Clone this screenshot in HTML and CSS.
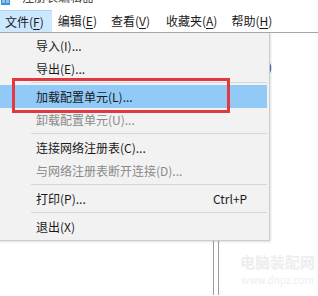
FILE: index.html
```html
<!DOCTYPE html>
<html lang="zh-CN">
<head>
    <meta charset="UTF-8">
    <meta name="viewport" content="width=device-width, initial-scale=1.0">
    <title>注册表编辑器</title>
    <link rel="stylesheet" href="styles.css">
</head>
<body>
    <div class="titlebar">
        <svg class="app-icon" width="11" height="6" viewBox="0 0 11 6">
            <rect x="1" y="0" width="9" height="5" fill="#3d8fd8"/>
            <rect x="2" y="0" width="3" height="3" fill="#8cc4f0"/>
            <rect x="6" y="0" width="3" height="3" fill="#8cc4f0"/>
        </svg>
        <span class="title-text">注册表编辑器</span>
    </div>

    <nav class="menubar">
        <span class="menu-item open">文件(<u>F</u>)</span>
        <span class="menu-item">编辑(<u>E</u>)</span>
        <span class="menu-item">查看(<u>V</u>)</span>
        <span class="menu-item">收藏夹(<u>A</u>)</span>
        <span class="menu-item">帮助(<u>H</u>)</span>
    </nav>

    <div class="workspace">
        <div class="tree-pane"></div>
        <div class="detail-pane">
            <div class="detail-row">(默认)</div>
        </div>

        <!-- 水印 -->
        <div class="watermark">
            <div class="wm-big">电脑装配网</div>
            <div class="wm-small">www.dnpz.com</div>
        </div>

        <!-- 文件菜单 -->
        <ul class="dropdown">
            <li class="item"><span class="label">导入(I)...</span></li>
            <li class="item"><span class="label">导出(E)...</span></li>
            <li class="sep"></li>
            <li class="item active"><span class="label">加载配置单元(L)...</span></li>
            <li class="item disabled"><span class="label">卸载配置单元(U)...</span></li>
            <li class="sep"></li>
            <li class="item"><span class="label">连接网络注册表(C)...</span></li>
            <li class="item disabled"><span class="label">与网络注册表断开连接(D)...</span></li>
            <li class="sep"></li>
            <li class="item"><span class="label">打印(P)...</span><span class="shortcut">Ctrl+P</span></li>
            <li class="sep"></li>
            <li class="item"><span class="label">退出(X)</span></li>
        </ul>

        <div class="callout"></div>
    </div>
</body>
</html>
```

FILE: styles.css
```css
body {
    margin: 0;
    background: #ffffff;
    font-family: "Noto Sans CJK SC", "Noto Sans", sans-serif;
    font-size: 12px;
    color: #1a1a1a;
    overflow: hidden;
    height: 296px;
}

/* 标题栏 (只露出底部) */
.titlebar {
    height: 6px;
    overflow: hidden;
    display: flex;
    align-items: flex-start;
    gap: 11px;
}

.app-icon {
    flex: none;
}

.title-text {
    margin-top: -11px;
    line-height: 16px;
    color: #444;
}

/* 菜单栏 */
.menubar {
    display: flex;
    margin-top: 4px;
    height: 22px;
}

.menu-item {
    padding: 0 8px 0 6px;
    line-height: 22px;
    box-sizing: border-box;
}

.menu-item:nth-child(4) {
    padding-left: 8px;
}

.menu-item.open {
    padding-left: 5px;
    background: #cce8ff;
    border-top: 1px solid #a9d5fb;
    line-height: 21px;
}

.menu-item u {
    text-decoration-thickness: 1px;
    text-underline-offset: 2px;
}

/* 主区域 */
.workspace {
    position: relative;
    display: flex;
    border-top: 1px solid #a6a6a6;
    height: 262px;
    overflow: hidden;
}

.tree-pane {
    width: 213px;
    border-right: 1px solid #9c9c9c;
}

.detail-pane {
    flex: 1;
    margin-left: 4px;
    border-left: 1px solid #9c9c9c;
    padding-top: 24px;
}

.detail-row {
    padding-left: 21px;
    line-height: 20px;
    color: #222;
}

.watermark {
    position: absolute;
    left: 240px;
    top: 220px;
    text-align: center;
    white-space: nowrap;
    color: #eeeeee;
}

.wm-big {
    font-size: 15px;
    line-height: 18px;
    font-weight: bold;
}

.wm-small {
    font-size: 10px;
    line-height: 14px;
    margin-top: 2px;
}

/* 下拉菜单 */
.dropdown {
    position: absolute;
    left: -3px;
    top: -2px;
    width: 267px;
    margin: 0;
    padding: 2px;
    list-style: none;
    background: #f2f2f2;
    border: 1px solid #cccccc;
    box-shadow: 1px 1px 2px rgba(0, 0, 0, 0.12);
}

.item {
    display: flex;
    height: 23px;
    line-height: 23px;
    padding-left: 36px;
}

.item .label {
    flex: 1;
}

.item .shortcut {
    width: 54px;
}

.item.active {
    background: #91c9f7;
}

.item.disabled {
    color: #8a8a8a;
}

.sep {
    height: 1px;
    margin: 2px 0 2px 31px;
    background: #d7d7d7;
}

/* 红色标注框 */
.callout {
    position: absolute;
    left: 12px;
    top: 45px;
    width: 218px;
    height: 35px;
    box-sizing: border-box;
    border: 3px solid #e0393f;
}
```
